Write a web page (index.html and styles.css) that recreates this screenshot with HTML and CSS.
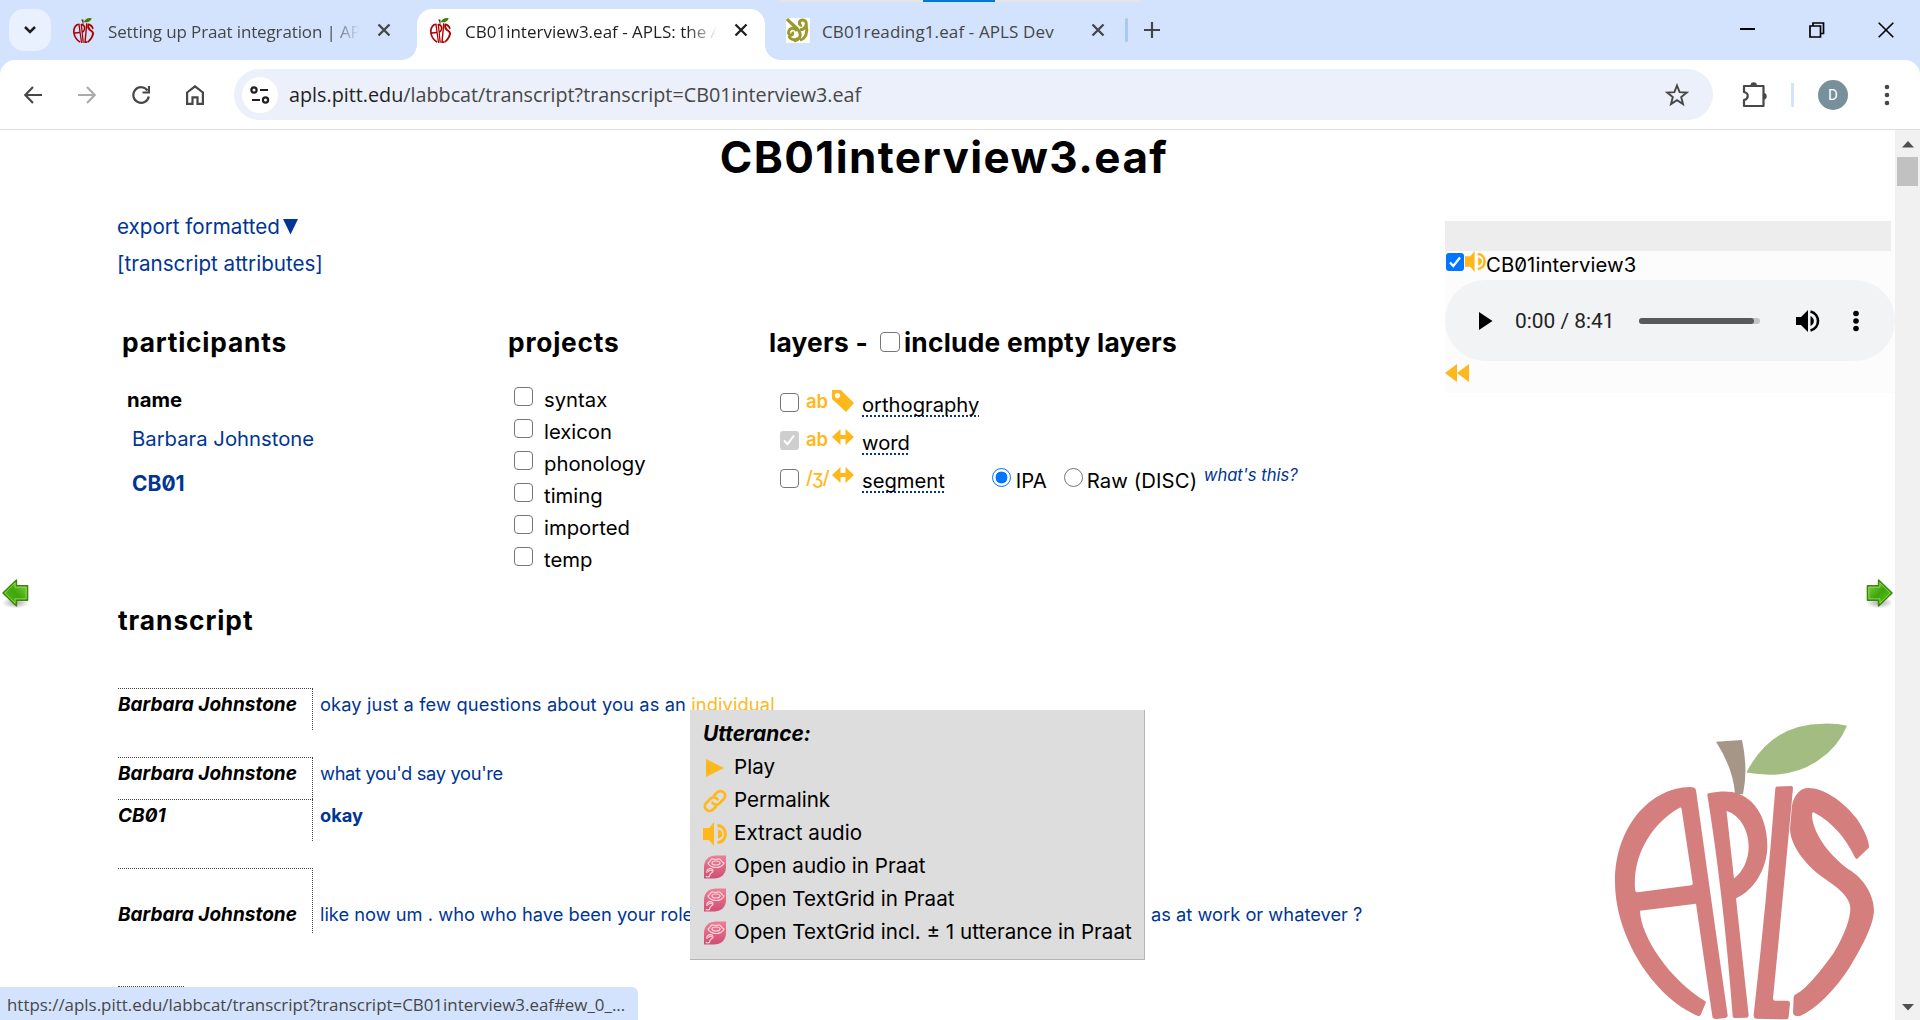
FILE: index.html
```html
<!DOCTYPE html>
<html lang="en">
<head>
<meta charset="utf-8">
<title>CB01interview3.eaf - APLS</title>
<link rel="stylesheet" href="styles.css">
</head>
<body>
<svg class="defs" width="0" height="0" aria-hidden="true">
  <defs>
    <linearGradient id="green" x1="0" y1="0" x2="1" y2="1"><stop offset="0" stop-color="#8fd84c"/><stop offset=".5" stop-color="#3fa50a"/><stop offset="1" stop-color="#5cc81c"/></linearGradient>
    <linearGradient id="pink" x1="0" y1="0" x2="0" y2="1"><stop offset="0" stop-color="#ee7f96"/><stop offset="1" stop-color="#cf4f70"/></linearGradient>
    <radialGradient id="shade"><stop offset="0" stop-color="#000" stop-opacity=".35"/><stop offset="1" stop-color="#000" stop-opacity="0"/></radialGradient>
  </defs>
  <symbol id="apple" viewBox="75 488 777 892" preserveAspectRatio="none">
    <path fill="#4f2f11" d="M378 544L456 539Q475 625 459 702L435 702Q430 625 378 544z"/>
    <path fill="#477b05" d="M469 637Q545 490 700 490Q740 489 771 496Q745 560 685 600Q600 660 469 637z"/>
    <g fill="#aa0000" fill-rule="evenodd">
      <path d="M318 690Q365 1030 413 1366q1 7-8 8L380 1377q-12 1-13-8L318 1031L150 1052C152 1130 240 1260 346 1324q2 2 1 5L332 1365q-4 5-10 2C190 1310 75 1130 75 965C75 800 180 682 300 680q16 0 18 10zM270 742C200 780 128 870 135 985q0 12 8 11L304 975q5-1 4-7L275 748q-1-8-5-6z"/>
      <path d="M352 704Q351 700 356 699C410 688 450 692 485 725C515 755 532 800 532 858C532 920 495 990 438 1014L476 1366q0 7-7 7L434 1374q-6 0-6-6Q400 1000 352 704zM410 752C450 765 476 810 476 858C476 900 458 935 432 955L410 756z"/>
      <path d="M556 684q0-4 5-5L604 677q5 0 5 6Q580 1000 549 1315q0 7 6 7L592 1322q8 0 8 8L596 1370q-1 8-9 8L500 1376q-10 0-9-12Q530 1020 556 684z"/>
      <path d="M606 735C612 705 630 683 655 683C700 683 760 722 800 775C825 812 838 845 837 862L802 896q-4 2-7-4C765 830 725 785 672 757q-6-3-6 8C668 810 705 875 775 927C825 955 852 1010 852 1050C852 1090 820 1155 780 1220C735 1290 680 1345 632 1367Q612 1372 609 1358L611 1312q0-7 8-10C650 1285 690 1235 730 1180C765 1122 781 1075 781 1045C781 1010 740 980 700 953C640 910 600 850 600 805z"/>
    </g>
  </symbol>
  <symbol id="close" viewBox="0 0 14 14"><path d="M1.5 1.5l11 11M12.500 1.500l-11 11" fill="none" stroke="currentColor" stroke-width="2.300"/></symbol>
  <symbol id="speaker" viewBox="0 0 24 24"><path fill="#ffb81c" d="M0 6h6l5-6v24l-5-6H0zM15 7.500c6 .5 6 8.500 0 9z"/><path fill="none" stroke="#ffb81c" stroke-width="3" d="M14.500 3.500C25 4 25 20 14.500 20.500"/></symbol>
  <symbol id="both" viewBox="0 0 22 16"><path fill="#ffb81c" d="M0 8l8.500-8v6h5V0L22 8l-8.500 8v-6h-5v6z"/></symbol>
  <symbol id="praat" viewBox="0 0 24 24">
    <path fill="url(#pink)" d="M1 23.500V12C1 5 6 .5 13 .5h10V12c0 7-5 11.500-12 11.500z"/>
    <g fill="none" stroke="#fbd5dc" stroke-width="1.200"><path d="M5 8c2-1 3-5 5-4q3 1 5 0c3-1 3 3 6 4-1 3-5 4.500-8 4.500S6 11 5 8z"/><ellipse cx="13" cy="8" rx="4" ry="2"/><path d="M4 18c-1-5 6-6 6-2 0 2-3 2-3 3.500 0 3-3.500 3-4 1.500M5.500 17c0-2 3-2.500 3-.8"/></g>
  </symbol>
  <symbol id="arrow" viewBox="0 0 30 32">
    <ellipse cx="15" cy="25" rx="14" ry="6" fill="url(#shade)"/>
    <path fill="url(#green)" stroke="#3d8410" stroke-width="1.500" stroke-linejoin="round" d="M28 15L14 1.500V7.500H2.500v15H14v6z" transform="translate(30 0) scale(-1 1)"/>
    <path fill="none" stroke="#a6e46a" stroke-width="1" stroke-opacity=".7" d="M26 15L15.500 4.500V9H4v12h11.500v4.500z" transform="translate(30 0) scale(-1 1)"/>
  </symbol>
</svg>

<div class="browser">
  <header class="tabstrip">
    <div class="loading"><i></i></div>
    <button class="tab-search"><svg width="14" height="10" viewBox="0 0 14 10"><path d="M2 2l5 5 5-5" fill="none" stroke="#1f1f1f" stroke-width="2.500"/></svg></button>
    <div class="tab tab-first">
      <svg class="favicon"><use href="#apple"/></svg>
      <span class="tab-title faded">Setting up Praat integration | AP</span>
      <svg class="x"><use href="#close"/></svg>
    </div>
    <div class="tab tab-active">
      <svg class="favicon"><use href="#apple"/></svg>
      <span class="tab-title faded">CB01interview3.eaf - APLS: the A</span>
      <svg class="x"><use href="#close"/></svg>
    </div>
    <div class="tab tab-last">
      <svg class="fern" viewBox="0 0 24 25"><rect width="24" height="25" fill="#fff"/><g fill="none" stroke="#9a9a2c" stroke-width="3"><path d="M1 1c4 5 9 7 12 12 3 5 0 9-5 10"/><path d="M14 12c8-1 8-11 2-10-4 1-3 6 0 5"/><path d="M11 13c-4-6-10-1-8 3 2 3 5 0 3-2"/><path d="M14 22c6-1 8-9 6-15"/><path d="M3 18c1 4 7 5 9 2"/></g></svg>
      <span class="tab-title">CB01reading1.eaf - APLS Dev</span>
      <svg class="x"><use href="#close"/></svg>
    </div>
    <span class="tab-sep"></span>
    <svg class="plus" width="16" height="16" viewBox="0 0 16 16"><path d="M8 0v16M0 8h16" stroke="#444746" stroke-width="2.200"/></svg>
    <div class="window-buttons">
      <svg width="16" height="16" viewBox="0 0 16 16"><path d="M0 7h15" stroke="#000" stroke-width="2"/></svg>
      <svg width="16" height="16" viewBox="0 0 16 16"><path d="M1 4h10.500v11H1zM4 4V1h10.500v10.500H12" fill="none" stroke="#000" stroke-width="1.700"/></svg>
      <svg width="16" height="16" viewBox="0 0 16 16"><path d="M.7.700l14.600 14.600M15.300.700L.7 15.300" stroke="#000" stroke-width="1.600"/></svg>
    </div>
  </header>

  <div class="toolbar-back">
    <nav class="toolbar">
      <svg class="nav-icon" viewBox="0 0 18 18"><path d="M18 9H1.500M9 1L1.300 9 9 17" fill="none" stroke="#474747" stroke-width="2.100"/></svg>
      <svg class="nav-icon" viewBox="0 0 18 18"><path d="M0 9h16.500M9 1l7.700 8L9 17" fill="none" stroke="#ababab" stroke-width="2.100"/></svg>
      <svg class="nav-icon" viewBox="0 0 18 18"><path d="M15.500 4.500A7.800 7.800 0 1 0 16.800 10.500M17 0v6.500h-6.500" fill="none" stroke="#474747" stroke-width="2.200"/></svg>
      <svg class="nav-icon home" viewBox="0 0 18 20"><path d="M1.100 7.500L9 1.300l7.900 6.200v11.400h-5.400v-6.500h-5v6.500H1.100z" fill="none" stroke="#474747" stroke-width="2.200"/></svg>
      <div class="omnibox">
        <span class="site-info"><svg width="20" height="18" viewBox="0 0 20 18"><g fill="none" stroke="#1f1f1f" stroke-width="2.200"><circle cx="4" cy="4" r="2.600"/><path d="M10 4h8M2 14h8"/><circle cx="15.500" cy="14" r="2.600"/></g></svg></span>
        <span class="url"><b>apls.pitt.edu</b>/labbcat/transcript?transcript=CB01interview3.eaf</span>
        <svg class="star" width="24" height="24" viewBox="0 0 24 24"><path d="M12 2.500l2.600 6.700 7.100.4-5.500 4.500 1.800 7-6-3.900-6 3.900 1.800-7-5.500-4.500 7.100-.4z" fill="none" stroke="#474747" stroke-width="1.900"/></svg>
      </div>
      <svg class="ext" width="26" height="26" viewBox="0 0 26 26"><path d="M3 4h19.500v20H3v-6c5-1 5-7 0-8z" fill="none" stroke="#474747" stroke-width="2.200" stroke-linejoin="round"/><path d="M9.500 3.500a3.200 3.200 0 0 1 6.400 0M22.500 11a3.200 3.200 0 0 1 0 6.400" fill="#474747"/></svg>
      <span class="bar-sep"></span>
      <span class="avatar">D</span>
      <svg class="menu" width="6" height="22" viewBox="0 0 6 22"><g fill="#474747"><circle cx="3" cy="3" r="2.300"/><circle cx="3" cy="11" r="2.300"/><circle cx="3" cy="19" r="2.300"/></g></svg>
    </nav>
  </div>

  <div class="viewport">
    <main class="page">
      <h1>CB01interview3.eaf</h1>
      <div class="links">
        <a class="export">export formatted<svg width="16" height="16" viewBox="0 0 16 16"><path d="M0 0h15L7.500 15.500z" fill="#003594"/></svg></a>
        <a class="attributes">[transcript attributes]</a>
      </div>

      <div class="filters">
        <section class="participants">
          <h2 class="wide">participants</h2>
          <p class="name">name</p>
          <a class="person">Barbara Johnstone</a>
          <a class="person main-person">CB01</a>
        </section>
        <section class="projects">
          <h2 class="wide">projects</h2>
          <ul>
            <li><input type="checkbox">syntax</li>
            <li><input type="checkbox">lexicon</li>
            <li><input type="checkbox">phonology</li>
            <li><input type="checkbox">timing</li>
            <li><input type="checkbox">imported</li>
            <li><input type="checkbox">temp</li>
          </ul>
        </section>
        <section class="layers">
          <h2 class="layers-title"><span>layers -</span><input type="checkbox"><span class="include">include empty layers</span></h2>
          <div class="layer"><input type="checkbox"><b class="scope">ab</b><svg class="tag" viewBox="0 0 22 22"><path fill="#ffb81c" fill-rule="evenodd" d="M0 0h9l13 13-8 9L0 9zM5.500 3a2.700 2.700 0 1 0 .01 0z"/></svg><span class="label">orthography</span></div>
          <div class="layer"><span class="locked"><svg width="18" height="18" viewBox="0 0 18 18"><path d="M4 9.500l3.500 3.700L14 4.500" fill="none" stroke="#fff" stroke-width="2"/></svg></span><b class="scope">ab</b><svg class="both"><use href="#both"/></svg><span class="label">word</span></div>
          <div class="layer"><input type="checkbox"><b class="scope phone">/ʒ/</b><svg class="both"><use href="#both"/></svg><span class="label">segment</span>
            <input type="radio" class="ipa" checked><span class="ipa-label">IPA</span><input type="radio" class="raw"><span class="raw-label">Raw (DISC)</span><a class="help">what's this?</a></div>
        </section>
      </div>

      <h2 class="transcript-title">transcript</h2>
      <div class="transcript">
        <div class="turn"><span class="speaker">Barbara Johnstone</span><span class="words airy">okay just a few questions about you as an <span class="hover">individual</span></span></div>
        <div class="gap"></div>
        <div class="turn"><span class="speaker">Barbara Johnstone</span><span class="words tight">what you'd say you're</span></div>
        <div class="turn"><span class="speaker">CB01</span><span class="words"><b>okay</b></span></div>
        <div class="gap"></div>
        <div class="turn tall"><span class="speaker">Barbara Johnstone</span><span class="words first-part">like now um . who who have been your role</span><span class="words">as at work or whatever ?</span></div>
        <div class="next-turn"></div>
      </div>
    </main>
    <div class="scrollbar"><svg width="12" height="7" viewBox="0 0 12 7"><path d="M0 6.500L6 0l6 6.500z" fill="#505050"/></svg><i></i><svg class="down" width="12" height="7" viewBox="0 0 12 7"><path d="M0 0h12L6 6.500z" fill="#505050"/></svg></div>

    <aside class="player">
      <div class="handle"></div>
      <div class="media"><span class="checked"><svg width="18" height="18" viewBox="0 0 18 18"><path d="M4 9.500l3.300 3.500L14 4.500" fill="none" stroke="#fff" stroke-width="2.300"/></svg></span><svg class="media-speaker"><use href="#speaker"/></svg><span class="media-name">CB01interview3</span></div>
      <div class="audio">
        <svg width="14" height="18" viewBox="0 0 14 18"><path d="M0 0l13.500 9L0 18z"/></svg>
        <span class="time">0:00 / 8:41</span>
        <span class="track"><i></i></span>
        <svg class="volume" width="24" height="22" viewBox="0 0 24 22"><path d="M0 7h5l7-7v22l-7-7H0zM14.500 6c4.500 2 4.500 8 0 10z"/><path d="M14.500 1.500c10 2.500 10 16.500 0 19" fill="none" stroke="#000" stroke-width="2.600"/></svg>
        <svg class="more" width="6" height="22" viewBox="0 0 6 22"><circle cx="3" cy="3.500" r="2.800"/><circle cx="3" cy="11" r="2.800"/><circle cx="3" cy="18.500" r="2.800"/></svg>
      </div>
      <svg class="rewind" width="24" height="18" viewBox="0 0 24 18"><path d="M12 0v18L0 9zM24 0v18L12 9z" fill="#ffb81c"/></svg>
    </aside>

    <svg class="arrow previous"><use href="#arrow"/></svg>
    <svg class="arrow next"><use href="#arrow"/></svg>
    <svg class="logo"><use href="#apple"/></svg>

    <div class="popup">
      <p class="popup-title">Utterance:</p>
      <p><svg viewBox="0 0 24 24"><path d="M3 3l18 9-18 9z" fill="#ffb81c"/></svg>Play</p>
      <p><svg viewBox="0 0 24 24"><g fill="none" stroke="#ffb81c" stroke-width="2.700" stroke-linecap="round" stroke-linejoin="round"><path d="M11 6.500l3-3a4.600 4.600 0 0 1 6.800 6.600l-4.500 4.300a4.600 4.600 0 0 1-6.800-.7"/><path d="M13 17.500l-3 3a4.600 4.600 0 0 1-6.800-6.600l4.500-4.300a4.600 4.600 0 0 1 6.800.7"/></g></svg>Permalink</p>
      <p><svg><use href="#speaker"/></svg>Extract audio</p>
      <p><svg><use href="#praat"/></svg>Open audio in Praat</p>
      <p><svg><use href="#praat"/></svg>Open TextGrid in Praat</p>
      <p><svg><use href="#praat"/></svg>Open TextGrid incl. ± 1 utterance in Praat</p>
    </div>

    <div class="status">https://apls.pitt.edu/labbcat/transcript?transcript=CB01interview3.eaf#ew_0_...</div>
  </div>
</div>
</body>
</html>
```
FILE: styles.css
```css
* { box-sizing: border-box; }
body { margin: 0; background: #fff; color: #000; font: 20.3px/32px Inter, "Liberation Sans", sans-serif; font-feature-settings: "zero" 1; white-space: nowrap; }
h1, h2, p, ul { margin: 0; padding: 0; }
svg { display: block; flex: none; }
.defs { position: absolute; }
.browser { width: 1920px; height: 1020px; overflow: hidden; display: flex; flex-direction: column; }

/* tab strip */
.tabstrip { position: relative; height: 60px; padding: 9px 26px 0 9px; background: #d3e3fd; display: flex; align-items: flex-start; font: 17px/24px "Open Sans", "Noto Sans", sans-serif; font-feature-settings: normal; color: #444746; }
.loading { position: absolute; top: 0; left: 779px; width: 362px; height: 2px; background: #e5e5e5; }
.loading i { display: block; width: 72px; height: 2px; margin-left: 144px; background: #0078d7; }
.tab-search { width: 42px; height: 42px; border: 0; padding: 0; border-radius: 15px; background: #e9f1ff; display: flex; align-items: center; justify-content: center; margin-right: 7px; }
.tab { height: 51px; padding-bottom: 9px; display: flex; align-items: center; }
.tab-first { width: 359px; padding-left: 15px; }
.tab-active { position: relative; width: 348px; padding-left: 13px; background: #fff; border-radius: 15px 15px 0 0; color: #1f1f1f; }
.tab-active::before, .tab-active::after { content: ""; position: absolute; bottom: 0; width: 15px; height: 15px; }
.tab-active::before { left: -15px; background: radial-gradient(circle at 0 0, transparent 14.5px, #fff 15px); }
.tab-active::after { right: -15px; background: radial-gradient(circle at 100% 0, transparent 14.5px, #fff 15px); }
.tab-last { width: 360px; padding-left: 21px; }
.favicon { width: 21px; height: 25px; margin-right: 14px; }
.fern { width: 24px; height: 25px; margin-right: 12px; }
.tab-title { width: 252px; padding-top: 4px; }
.tab-first .tab-title { letter-spacing: -.14px; }
.tab-last .tab-title { width: 269px; letter-spacing: .12px; }
.faded { -webkit-mask-image: linear-gradient(90deg, #000 222px, transparent 252px); mask-image: linear-gradient(90deg, #000 222px, transparent 252px); }
.x { width: 14px; height: 14px; margin-left: 17px; }
.tab-last .x { margin-left: 0; }
.tab-sep { width: 3px; height: 24px; margin-top: 9px; background: #a8c7fa; border-radius: 2px; }
.plus { margin: 13px 0 0 16px; }
.window-buttons { margin: 13px 0 0 auto; display: flex; gap: 53px; }

/* toolbar */
.toolbar-back { background: #d3e3fd; }
.toolbar { height: 70px; padding: 0 30px 0 24px; background: #fff; border-bottom: 1px solid #dedede; border-radius: 15px 15px 0 0; display: flex; align-items: center; }
.nav-icon { width: 18px; height: 18px; margin-right: 36px; }
.home { height: 20px; margin-right: 30px; }
.omnibox { width: 1479px; height: 51px; border-radius: 26px; background: #ebf0fa; padding: 0 24px 0 8px; display: flex; align-items: center; }
.site-info { width: 36px; height: 36px; border-radius: 50%; background: #fff; display: flex; align-items: center; justify-content: center; }
.url { margin-left: 11px; font: 19.75px/30px "Open Sans", "Noto Sans", sans-serif; font-feature-settings: normal; color: #474747; }
.url b { font-weight: 400; color: #1f1f1f; }
.star { margin-left: auto; }
.ext { margin-left: 28px; }
.bar-sep { width: 3px; height: 24px; margin-left: 24px; background: #d3e3fd; }
.avatar { width: 30px; height: 30px; margin-left: 24px; border-radius: 50%; background: #78909c; color: #fff; font: 15px/30px Roboto, sans-serif; text-align: center; }
.menu { margin-left: 36px; }

/* page */
.viewport { position: relative; height: 890px; display: flex; }
.page { width: 1895px; padding-left: 118px; }
h1 { font-size: 44px; line-height: 54px; letter-spacing: 1.4px; font-weight: 700; text-align: center; margin: 0 125px 24px 0; font-feature-settings: normal; }
a { color: #003594; }
.links { display: flex; flex-direction: column; line-height: 37px; font-size: 20.600px; }
.links a { margin-left: -1px; }
.export { display: flex; align-items: center; gap: 3px; }
h2 { font-size: 26.300px; line-height: 34px; font-weight: 700; }
.wide { letter-spacing: .8px; }
.filters { display: flex; margin-top: 44px; height: 278px; }
.participants { width: 387px; padding-left: 4px; }
.name { font-weight: 700; margin: 24px 0 7px 5px; }
.person { display: block; margin: 0 0 13px 10px; }
.main-person { font-weight: 700; font-size: 21px; }
.projects { width: 261px; padding-left: 3px; }
.projects ul { list-style: none; margin-top: 24px; }
.projects li { display: flex; align-items: flex-start; padding-left: 6px; }
input[type=checkbox] { appearance: none; flex: none; width: 19px; height: 19px; margin: 0; border: 1.500px solid #767676; border-radius: 4px; background: #fff; }
.projects li input[type=checkbox] { margin: 3px 11px 0 0; }
.layers { padding-left: 3px; }
.layers-title { display: flex; letter-spacing: .25px; margin-bottom: 26px; }
h2.layers-title input[type=checkbox] { width: 20px; height: 20px; margin: 6px 4px 0 12px; }
.include { letter-spacing: .26px; }
.layer { display: flex; align-items: flex-start; height: 38px; padding-left: 12px; line-height: 38px; }
.layer input[type=checkbox], .locked { flex: none; width: 19px; height: 19px; margin: 7px 7px 0 -1px; }
.locked { background: #cecece; border-radius: 3px; }
.scope { flex: none; width: 26px; font-size: 18.500px; line-height: 30px; color: #ffb81c; font-weight: 600; }
.phone { font-weight: 500; letter-spacing: -.8px; }
.tag, .both { width: 22px; height: 22px; margin: 4px 8px 0 0; }
.both { height: 16px; margin-top: 5px; }
.label { line-height: 26px; height: 30px; margin-top: 6px; font-size: 20.200px; text-decoration: underline dotted #003594 2px; text-underline-offset: 3px; text-decoration-skip-ink: none; }
input[type=radio] { appearance: none; flex: none; width: 19px; height: 19px; border: 1.500px solid #767676; border-radius: 50%; margin: 6px 0 0; }
input.ipa[type=radio] { margin-left: 47px; border-color: #0075ff; background: radial-gradient(circle, #0075ff 5.700px, #fff 6.200px); }
.ipa-label { width: 48px; margin-left: 5px; }
.raw-label { width: 116px; margin-left: 4px; letter-spacing: .1px; }
.help { margin-left: 1px; font-size: 16.600px; font-style: italic; line-height: 26px; }

/* transcript */
.transcript-title { letter-spacing: .94px; margin-bottom: 50px; }
.turn { display: flex; height: 42px; font-size: 18.300px; line-height: 31px; }
.speaker { width: 195px; border-top: 1px dotted #444; border-right: 1px dotted #444; font-size: 19px; font-weight: 700; font-style: italic; margin-right: 7px; }
.words { padding-top: 1px; color: #003594; }
.airy { letter-spacing: .12px; }
.tight { letter-spacing: -.33px; }
.hover { color: #ffb81c; }
.gap { height: 27px; }
.tall { height: 65px; }
.tall .speaker { padding-top: 30px; }
.tall .words { padding-top: 31px; }
.first-part { width: 831px; }
.next-turn { width: 66px; margin-top: 53px; border-top: 1px dotted #444; }

/* scrollbar */
.scrollbar { width: 25px; background: #f1f1f1; display: flex; flex-direction: column; align-items: center; padding: 11px 0 9px; }
.scrollbar i { width: 21px; height: 29px; margin-top: 9px; background: #c1c1c1; }
.down { margin-top: auto; }

/* floating audio player */
.player { position: absolute; left: 1445px; top: 91px; width: 450px; height: 172px; background: #fcfcfc; }
.handle { width: 446px; height: 30px; background: #ededed; }
.media { display: flex; height: 29px; line-height: 27px; }
.checked { width: 18px; height: 18px; margin: 2px 1px 0 1px; border-radius: 3px; background: #0075ff; }
.media-speaker { width: 21px; height: 21px; }
.media-name { letter-spacing: .08px; }
.audio { height: 81px; border-radius: 41px; background: #f1f3f4; display: flex; align-items: center; padding-left: 34px; }
.time { width: 96px; margin-left: 22px; font: 20.900px/30px Roboto, sans-serif; color: #222; }
.track { width: 121px; height: 6px; margin-left: 28px; border-radius: 3px; background: #c4c4c4; }
.track i { display: block; width: 115px; height: 6px; border-radius: 3px; background: #595959; }
.volume { margin-left: 36px; }
.more { margin-left: 33px; }
.rewind { margin-top: 3px; }

/* page turners, watermark, popup menu, link preview */
.arrow { position: absolute; top: 448px; width: 29px; height: 32px; }
.previous { left: 1px; }
.next { left: 1865px; transform: scaleX(-1); }
.logo { position: absolute; left: 1615px; top: 593px; width: 259px; height: 297px; opacity: .5; }
.popup { position: absolute; left: 690px; top: 580px; width: 455px; height: 250px; padding: 7px 0 0 13px; background: #ddd; border-right: 1px solid #b5b5b5; border-bottom: 1px solid #b5b5b5; line-height: 33px; font-size: 20.600px; }
.popup p { display: flex; }
.popup svg { width: 24px; height: 24px; margin: 6px 7px 0 0; }
.popup .popup-title { font-size: 20.900px; font-weight: 700; font-style: italic; }
.status { position: absolute; left: 0; bottom: 0; width: 638px; height: 33px; padding: 1px 0 0 7px; border-radius: 0 6px 0 0; background: #d3e3fd; color: #474747; font: 16.900px/33px "Open Sans", "Noto Sans", sans-serif; font-feature-settings: normal; }
```
